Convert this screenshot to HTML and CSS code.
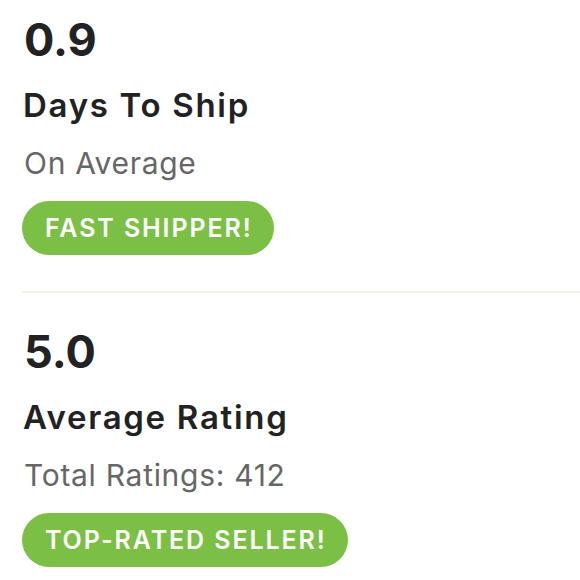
FILE: index.html
```html
<!DOCTYPE html>
<html>
<head>
<meta charset="utf-8">
<link rel="stylesheet" href="styles.css">
</head>
<body>
<div class="stats">
  <section class="stat">
    <div class="value">0.9</div>
    <div class="label">Days To Ship</div>
    <div class="sub">On Average</div>
    <span class="badge">FAST SHIPPER!</span>
  </section>
  <div class="divider"></div>
  <section class="stat">
    <div class="value">5.0</div>
    <div class="label">Average Rating</div>
    <div class="sub">Total Ratings: 412</div>
    <span class="badge">TOP-RATED SELLER!</span>
  </section>
</div>
</body>
</html>
```
FILE: styles.css
```css
html, body {
  margin: 0;
  padding: 0;
  background: #ffffff;
}
body {
  font-family: Inter, "Noto Sans", sans-serif;
  color: #222222;
}
.stats {
  display: flex;
  flex-direction: column;
  padding: 17px 0 0 22px;
}
.stat {
  display: flex;
  flex-direction: column;
  align-items: flex-start;
}
.value {
  font-size: 45px;
  font-weight: 700;
  line-height: 45px;
  padding-left: 2px;
}
.label {
  font-size: 33px;
  font-weight: 600;
  line-height: 33px;
  margin-top: 26.5px;
  padding-left: 1px;
  letter-spacing: 1.7px;
}
.sub {
  font-size: 30px;
  font-weight: 400;
  color: #666666;
  line-height: 30px;
  margin-top: 26.5px;
  padding-left: 2px;
  letter-spacing: 0.7px;
}
.badge {
  margin-top: 23px;
  background: #7bbf45;
  color: #ffffff;
  font-size: 25px;
  font-weight: 600;
  line-height: 54px;
  height: 54px;
  padding: 0 21px 0 23px;
  border-radius: 27px;
  letter-spacing: 1.9px;
}
.divider {
  height: 2px;
  background: #f1f2ea;
  margin: 36px 0 36px 0;
}
```
